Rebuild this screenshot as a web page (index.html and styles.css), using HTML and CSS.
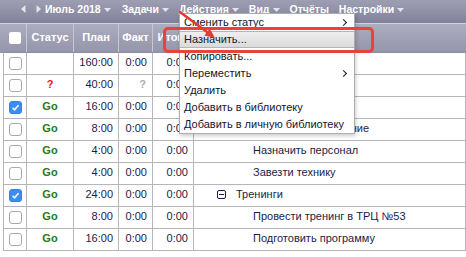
FILE: index.html
```html
<!DOCTYPE html>
<html lang="ru">
<head>
    <meta charset="UTF-8">
    <meta name="viewport" content="width=device-width, initial-scale=1.0">
    <title>План работ</title>
    <link rel="stylesheet" href="styles.css">
</head>
<body>
    <div class="toolbar">
        <svg class="nav" width="5" height="8" viewBox="0 0 5 8"><path d="M4.5 0v8L0 4z"/></svg>
        <svg class="nav nav-next" width="5" height="8" viewBox="0 0 5 8"><path d="M0.5 0v8L5 4z"/></svg>
        <span class="tb-item tb-period">Июль 2018 <svg class="caret" width="7" height="4" viewBox="0 0 7 4"><path d="M0 0h7L3.5 4z"/></svg></span>
        <span class="tb-item">Задачи <svg class="caret" width="7" height="4" viewBox="0 0 7 4"><path d="M0 0h7L3.5 4z"/></svg></span>
        <span class="tb-item">Действия <svg class="caret" width="7" height="4" viewBox="0 0 7 4"><path d="M0 0h7L3.5 4z"/></svg></span>
        <span class="tb-item">Вид <svg class="caret" width="7" height="4" viewBox="0 0 7 4"><path d="M0 0h7L3.5 4z"/></svg></span>
        <span class="tb-item">Отчёты</span>
        <span class="tb-item">Настройки <svg class="caret" width="7" height="4" viewBox="0 0 7 4"><path d="M0 0h7L3.5 4z"/></svg></span>
    </div>

    <div class="grid">
        <table>
            <colgroup>
                <col class="c-check">
                <col class="c-status">
                <col class="c-plan">
                <col class="c-fact">
                <col class="c-total">
                <col>
            </colgroup>
            <thead>
                <tr>
                    <th><span class="head-check"></span></th>
                    <th>Статус</th>
                    <th>План</th>
                    <th>Факт</th>
                    <th>Итого</th>
                    <th></th>
                </tr>
            </thead>
            <tbody>
                <tr>
                    <td class="check"><span class="box"></span></td>
                    <td class="status"></td>
                    <td class="num">160:00</td>
                    <td class="num">0:00</td>
                    <td class="num">0:00</td>
                    <td class="name"></td>
                </tr>
                <tr>
                    <td class="check"><span class="box"></span></td>
                    <td class="status unknown">?</td>
                    <td class="num">40:00</td>
                    <td class="num muted">?</td>
                    <td class="num">0:00</td>
                    <td class="name"></td>
                </tr>
                <tr>
                    <td class="check"><span class="box checked"></span></td>
                    <td class="status go">Go</td>
                    <td class="num">16:00</td>
                    <td class="num">0:00</td>
                    <td class="num">0:00</td>
                    <td class="name"></td>
                </tr>
                <tr>
                    <td class="check"><span class="box"></span></td>
                    <td class="status go">Go</td>
                    <td class="num">8:00</td>
                    <td class="num">0:00</td>
                    <td class="num">0:00</td>
                    <td class="name indent-2"><svg class="toggle" width="9" height="9" viewBox="0 0 9 9"><rect x="0.5" y="0.5" width="8" height="8" rx="1.5"/><path d="M2 4.5h5"/></svg>Техническое обеспечение</td>
                </tr>
                <tr>
                    <td class="check"><span class="box"></span></td>
                    <td class="status go">Go</td>
                    <td class="num">4:00</td>
                    <td class="num">0:00</td>
                    <td class="num">0:00</td>
                    <td class="name indent-3"><span class="leaf"></span>Назначить персонал</td>
                </tr>
                <tr>
                    <td class="check"><span class="box"></span></td>
                    <td class="status go">Go</td>
                    <td class="num">4:00</td>
                    <td class="num">0:00</td>
                    <td class="num">0:00</td>
                    <td class="name indent-3"><span class="leaf"></span>Завезти технику</td>
                </tr>
                <tr>
                    <td class="check"><span class="box checked"></span></td>
                    <td class="status go">Go</td>
                    <td class="num">24:00</td>
                    <td class="num">0:00</td>
                    <td class="num">0:00</td>
                    <td class="name indent-2"><svg class="toggle" width="9" height="9" viewBox="0 0 9 9"><rect x="0.5" y="0.5" width="8" height="8" rx="1.5"/><path d="M2 4.5h5"/></svg>Тренинги</td>
                </tr>
                <tr>
                    <td class="check"><span class="box"></span></td>
                    <td class="status go">Go</td>
                    <td class="num">8:00</td>
                    <td class="num">0:00</td>
                    <td class="num">0:00</td>
                    <td class="name indent-3"><span class="leaf"></span>Провести тренинг в ТРЦ №53</td>
                </tr>
                <tr>
                    <td class="check"><span class="box"></span></td>
                    <td class="status go">Go</td>
                    <td class="num">16:00</td>
                    <td class="num">0:00</td>
                    <td class="num">0:00</td>
                    <td class="name indent-3"><span class="leaf"></span>Подготовить программу</td>
                </tr>
            </tbody>
        </table>
    </div>

    <ul class="menu">
        <li class="menu-item has-sub">Сменить статус</li>
        <li class="menu-item is-hover">Назначить...</li>
        <li class="menu-item">Копировать...</li>
        <li class="menu-item has-sub">Переместить</li>
        <li class="menu-item">Удалить</li>
        <li class="menu-item">Добавить в библиотеку</li>
        <li class="menu-item">Добавить в личную библиотеку</li>
    </ul>

    <!-- annotation on top of the screenshot -->
    <div class="mark"></div>
    <svg class="pointer" width="466" height="60" viewBox="0 0 466 60">
        <path d="M180 12L207 32" stroke="#e53b32" stroke-width="2.5" stroke-linecap="round" fill="none"/>
        <path d="M215 38L204.3 35.5L209.8 28.4z" fill="#e53b32"/>
    </svg>
</body>
</html>
```

FILE: styles.css
```css
:root {
    --text: #1c1c48;
    --line: #b6b6b6;
    --head-line: #c8c8d5;
    --go: #237a1d;
    --red: #e8423a;
}

body {
    margin: 0;
    font-family: "Liberation Sans", Arial, sans-serif;
    font-size: 11px;
    color: var(--text);
    background: #fff;
    position: relative;
    overflow: hidden;
}

.toolbar {
    display: flex;
    align-items: center;
    height: 24px;
    padding: 0 0 5px 21px;
    box-sizing: border-box;
    background: linear-gradient(#9e9eb3, #81819a);
    border-bottom: 1px solid #d2d2dd;
    color: #fff;
    font-size: 10.5px;
    font-weight: bold;
}

.toolbar svg {
    fill: #e4e4ec;
}

.nav-next {
    margin-left: 10px;
}

.tb-item {
    display: flex;
    align-items: center;
    gap: 3px;
    margin-left: 10px;
}

.tb-period {
    margin-left: 4px;
    margin-right: 1px;
}

.caret {
    margin-top: 1px;
}

.grid {
    padding-left: 3px;
    background: linear-gradient(#adadc0, #9494aa) 0 0 / 100% 29px no-repeat;
}

table {
    border-collapse: collapse;
    table-layout: fixed;
    width: 463px;
}

.c-check { width: 23px; }
.c-status { width: 47px; }
.c-plan { width: 45px; }
.c-fact { width: 34px; }
.c-total { width: 41px; }

th {
    padding: 0 0 1px;
    line-height: 27px;
    color: #fff;
    font-weight: bold;
    text-align: center;
    border-left: 1px solid var(--head-line);
    border-bottom: 1px solid #8f8fa4;
}

th:first-child {
    border-left: none;
}

.head-check {
    display: inline-block;
    width: 12px;
    height: 12px;
    background: #fff;
    border-radius: 2px;
    vertical-align: middle;
}

td {
    padding: 0 0 2px;
    line-height: 19px;
    border: 1px solid var(--line);
    white-space: nowrap;
    overflow: hidden;
}

td.check {
    text-align: center;
}

.box {
    display: inline-block;
    width: 13px;
    height: 13px;
    box-sizing: border-box;
    border: 1px solid #a9a9a9;
    border-radius: 3px;
    background: #fff;
    vertical-align: middle;
}

.box.checked {
    border-color: #3583ea;
    background: #3b8df5 url("data:image/svg+xml,%3Csvg xmlns='http://www.w3.org/2000/svg' width='11' height='11'%3E%3Cpath d='M2.6 5.8l2 2 3.9-4.6' stroke='white' stroke-width='1.6' fill='none'/%3E%3C/svg%3E") center / 11px 11px no-repeat;
}

.status {
    text-align: center;
    font-weight: bold;
}

.status.go {
    color: var(--go);
}

.status.unknown {
    color: #e8141e;
}

.num {
    text-align: right;
    padding-right: 5px;
}

.num.muted {
    color: #adadad;
    font-weight: bold;
    padding-right: 6px;
}

.indent-2 { padding-left: 23px; }
.indent-3 { padding-left: 40px; }

.toggle {
    fill: none;
    stroke: var(--text);
    margin-right: 10px;
    vertical-align: -1px;
}

.leaf {
    display: inline-block;
    width: 19px;
}

/* dropdown of "Действия" */
.menu {
    position: absolute;
    left: 179px;
    top: 13px;
    width: 176px;
    margin: 0;
    padding: 0;
    list-style: none;
    box-sizing: border-box;
    background: #fff;
    border: 1px solid #adadad;
    box-shadow: 1px 2px 4px rgba(0, 0, 0, 0.2);
    color: #15152e;
}

.menu-item {
    position: relative;
    height: 17px;
    line-height: 16px;
    padding-left: 4px;
}

.menu-item.is-hover {
    background: linear-gradient(#f0f0f0, #d9d9d9);
    box-shadow: inset 0 1px 0 #b5b5b5, inset 0 -1px 0 #b5b5b5;
}

.menu-item.has-sub::after {
    content: "";
    position: absolute;
    right: 8px;
    top: 6px;
    width: 4px;
    height: 4px;
    border-top: 1.5px solid #15152e;
    border-right: 1.5px solid #15152e;
    transform: rotate(45deg);
}

.mark {
    position: absolute;
    left: 163px;
    top: 27px;
    width: 211px;
    height: 26px;
    box-sizing: border-box;
    border: 3px solid var(--red);
    border-radius: 5px;
}

.pointer {
    position: absolute;
    left: 0;
    top: 0;
    pointer-events: none;
}
```
